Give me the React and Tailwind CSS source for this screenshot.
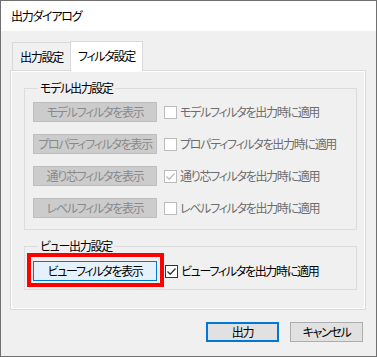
const FONT = "font-['Noto_Sans_CJK_JP','Noto_Sans',sans-serif] [font-feature-settings:'palt'] tracking-[-1.3px]"

const rows = [
  { button: 'モデルフィルタを表示', label: 'モデルフィルタを出力時に適用', checked: false },
  { button: 'プロパティフィルタを表示', label: 'プロパティフィルタを出力時に適用', checked: false },
  { button: '通り芯フィルタを表示', label: '通り芯フィルタを出力時に適用', checked: true },
  { button: 'レベルフィルタを表示', label: 'レベルフィルタを出力時に適用', checked: false },
]

function Check({ checked, disabled }) {
  const stroke = disabled ? '#bcbcbc' : '#333333'
  return (
    <span
      className={`w-[13px] h-[13px] shrink-0 border bg-white flex items-center justify-center ${
        disabled ? 'border-[#bcbcbc]' : 'border-[#333333]'
      }`}
    >
      {checked && (
        <svg width="11" height="11" viewBox="0 0 11 11">
          <path d="M1.5 5.5 L4.2 8.2 L9.5 2.5" fill="none" stroke={stroke} strokeWidth="1.3" />
        </svg>
      )}
    </span>
  )
}

export default function App() {
  return (
    <div className={`w-[377px] h-[357px] border border-[#707070] bg-[#f0f0f0] flex flex-col text-[12px] leading-[16px] text-black whitespace-nowrap ${FONT}`}>
      <div className="h-[30px] bg-white flex items-center pl-[10px]">出力ダイアログ</div>

      <div className="flex-1 pt-[10px] pl-[9px] pr-[10px]">
        {/* tabs */}
        <div className="flex items-end pl-[2px]">
          <div className="w-[58px] h-[28px] border-l border-t border-[#d9d9d9] flex items-center justify-center">
            出力設定
          </div>
          <div className="relative z-10 w-[73px] h-[30px] -mb-[1px] border-l border-t border-r border-[#d9d9d9] bg-white flex items-center justify-center pb-[1px]">
            フィルタ設定
          </div>
        </div>

        {/* tab page */}
        <div className="h-[240px] border border-[#d9d9d9] shadow-[inset_1px_1px_0_#ffffff,inset_-1px_-1px_0_#ffffff] pt-[9px] pl-[13px] pr-[8px]">
          <fieldset className="border border-[#dcdcdc] pl-[8px] pt-[6px] pb-[11px]">
            <legend className="ml-[5px] px-[2px]">モデル出力設定</legend>
            <div className="flex flex-col gap-[12px]">
              {rows.map((r) => (
                <div key={r.button} className="flex items-center">
                  <div className="w-[124px] h-[20px] border border-[#bfbfbf] bg-[#cccccc] text-[#8a8a8a] flex items-center justify-center">
                    {r.button}
                  </div>
                  <div className="ml-[7px] flex items-center gap-[3px] text-[#6d6d6d]">
                    <Check checked={r.checked} disabled />
                    <span>{r.label}</span>
                  </div>
                </div>
              ))}
            </div>
          </fieldset>

          <fieldset className="mt-[8px] border border-[#dcdcdc] pl-[8px] pt-[7px] pb-[8px]">
            <legend className="ml-[5px] px-[2px]">ビュー出力設定</legend>
            <div className="flex items-center">
              <div className="relative">
                <div className="w-[124px] h-[20px] border border-[#0078d7] bg-[#e5f1fb] flex items-center justify-center">
                  ビューフィルタを表示
                </div>
                <div className="absolute -left-[6px] -top-[8px] -right-[7px] -bottom-[6px] border-[4px] border-[#ff0000]" />
              </div>
              <div className="ml-[8px] flex items-center gap-[3px]">
                <Check checked />
                <span>ビューフィルタを出力時に適用</span>
              </div>
            </div>
          </fieldset>
        </div>

        {/* dialog buttons */}
        <div className="mt-[12px] flex justify-end gap-[11px] pr-[3px]">
          <div className="w-[73px] h-[20px] border-2 border-[#0078d7] bg-[#e1e1e1] flex items-center justify-center">
            出力
          </div>
          <div className="w-[73px] h-[20px] border border-[#adadad] bg-[#e1e1e1] flex items-center justify-center">
            キャンセル
          </div>
        </div>
      </div>
    </div>
  )
}
